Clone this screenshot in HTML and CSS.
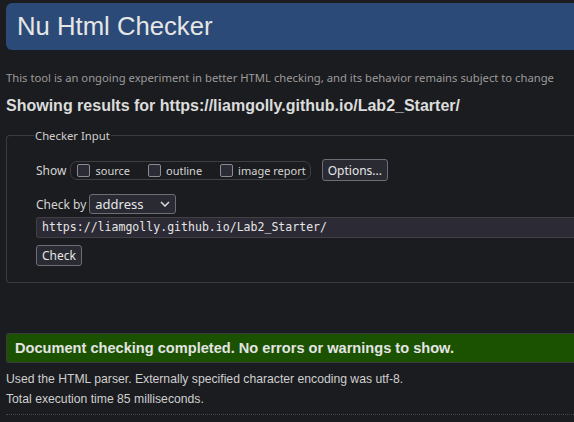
FILE: index.html
```html
<!DOCTYPE html>
<html>
<head>
<meta charset="utf-8">
<link rel="stylesheet" href="styles.css">
</head>
<body>
<h1 class="title">Nu Html Checker</h1>
<p class="intro">This tool is an ongoing experiment in better HTML checking, and its behavior remains subject to change</p>
<h2 class="results">Showing results for https://liamgolly.github.io/Lab2_Starter/</h2>
<form class="form">
  <fieldset class="fs">
    <legend class="legend">Checker Input</legend>
    <div class="row show-row">
      <span class="label">Show</span>
      <span class="group">
        <label class="opt"><span class="box"></span>source</label>
        <label class="opt"><span class="box"></span>outline</label>
        <label class="opt"><span class="box"></span>image report</label>
      </span>
      <span class="btn options">Options...</span>
    </div>
    <div class="row by-row">
      <span class="label">Check by</span>
      <span class="select">address<svg class="chev" width="10" height="6" viewBox="0 0 10 6"><path d="M1 1 L5 5 L9 1" fill="none" stroke="#ddd" stroke-width="1.5"/></svg></span>
    </div>
    <div class="url">https://liamgolly.github.io/Lab2_Starter/</div>
    <div class="row"><span class="btn check">Check</span></div>
  </fieldset>
</form>
<div class="success">Document checking completed. No errors or warnings to show.</div>
<p class="info">Used the HTML parser. Externally specified character encoding was utf-8.</p>
<p class="info">Total execution time 85 milliseconds.</p>
<div class="dots"></div>
</body>
</html>
```
FILE: styles.css
```css
html, body {
  margin: 0;
  padding: 0;
  background: #1b1c1f;
  color: #d8d8d8;
  overflow: hidden;
}
body {
  padding-left: 6px;
  padding-top: 3px;
}
.title {
  margin: 0;
  height: 47px;
  line-height: 47px;
  background: #2b4a77;
  border-radius: 6px 0 0 6px;
  padding-left: 11px;
  font-family: "Liberation Sans", Arial, sans-serif;
  font-weight: normal;
  font-size: 25.7px;
  color: #e6e6e6;
}
.intro {
  margin: 20px 0 0 0;
  font-family: "Noto Sans", sans-serif;
  font-size: 11.25px;
  line-height: 15px;
  color: #9b9b9b;
}
.results {
  margin: 11px 0 0 0;
  font-family: "Liberation Sans", Arial, sans-serif;
  font-weight: bold;
  font-size: 16px;
  line-height: 20px;
  color: #dcdcdc;
}
.form {
  margin-top: 12px;
}
.fs {
  margin: 0;
  border: 1px solid #3b3c3f;
  border-right: none;
  border-radius: 4px 0 0 4px;
  padding: 6px 0 16px 29px;
}
.legend {
  font-family: "Noto Sans", sans-serif;
  font-size: 11.3px;
  color: #cfcfcf;
  padding: 0 1px;
  margin-left: -2px;
}
.row {
  display: flex;
  align-items: center;
  font-family: "Noto Sans", sans-serif;
  font-size: 12px;
  color: #d4d4d4;
}
.show-row {
  margin-top: 10px;
}
.label {
  margin-right: 3px;
}
.show-row .label {
  margin-right: 4px;
}
.group {
  display: flex;
  align-items: center;
  border: 1px solid #3e3f44;
  border-radius: 7px;
  height: 17px;
  padding: 0 4px 0 6px;
  font-size: 11px;
}
.opt {
  display: flex;
  align-items: center;
  margin-right: 18px;
}
.opt:last-child {
  margin-right: 0;
}
.box {
  width: 11px;
  height: 11px;
  border: 1px solid #8a8a96;
  border-radius: 2px;
  background: #2b2b36;
  margin-right: 5px;
}
.btn {
  display: inline-flex;
  align-items: center;
  border: 1px solid #6d6d78;
  border-radius: 3px;
  background: #2a2a33;
  height: 19px;
  color: #e6e6e6;
  font-family: "Noto Sans", sans-serif;
}
.options {
  margin-left: 11px;
  height: 20px;
  padding: 0 5px;
}
.by-row {
  margin-top: 13px;
}
.select {
  display: inline-flex;
  align-items: center;
  justify-content: space-between;
  width: 75px;
  height: 18px;
  border: 1px solid #6d6d78;
  border-radius: 3px;
  background: #2a2a33;
  padding: 0 5px;
  font-size: 13px;
  color: #e6e6e6;
  margin-left: 0;
}
.url {
  margin-top: 3px;
  height: 19px;
  line-height: 19px;
  background: #2b2a35;
  border: 1px solid #3f3f45;
  border-right: none;
  border-radius: 3px 0 0 3px;
  padding-left: 5px;
  font-family: "DejaVu Sans Mono", "Liberation Mono", monospace;
  font-size: 11.55px;
  color: #e6e6e6;
}
.check {
  margin-top: 7px;
  font-size: 12px;
  padding: 0 5px;
}
.success {
  margin-top: 50px;
  height: 28px;
  line-height: 28px;
  background: #1b5201;
  border: 1px solid #3b3c3f;
  border-right: none;
  border-radius: 3px 0 0 3px;
  padding-left: 8px;
  font-family: "Liberation Sans", Arial, sans-serif;
  font-weight: bold;
  font-size: 14.6px;
  color: #e4e4e4;
}
.info {
  margin: 9px 0 0 0;
  font-family: "Liberation Sans", Arial, sans-serif;
  font-size: 12.2px;
  line-height: 14px;
  color: #cfcfcf;
}
.info + .info {
  margin-top: 6px;
}
.dots {
  margin-top: 8px;
  border-top: 1px dotted #444;
}
```
